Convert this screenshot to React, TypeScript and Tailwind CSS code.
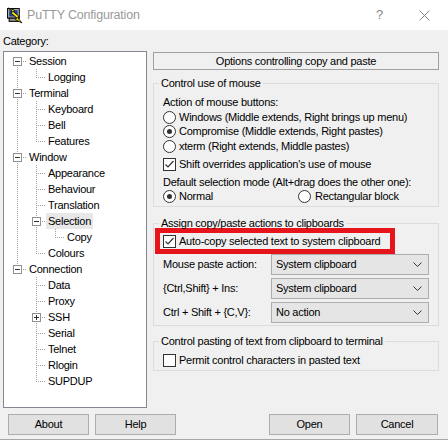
import React from "react";

type Node = { label: string; children?: Node[]; closed?: boolean };

type Row = {
  label: string;
  depth: number;
  first: boolean;
  last: boolean;
  cont: boolean[];
  expander: "" | "-" | "+";
};

const tree: Node[] = [
  { label: "Session", children: [{ label: "Logging" }] },
  {
    label: "Terminal",
    children: [{ label: "Keyboard" }, { label: "Bell" }, { label: "Features" }],
  },
  {
    label: "Window",
    children: [
      { label: "Appearance" },
      { label: "Behaviour" },
      { label: "Translation" },
      { label: "Selection", children: [{ label: "Copy" }] },
      { label: "Colours" },
    ],
  },
  {
    label: "Connection",
    children: [
      { label: "Data" },
      { label: "Proxy" },
      { label: "SSH", closed: true, children: [{ label: "Kex" }] },
      { label: "Serial" },
      { label: "Telnet" },
      { label: "Rlogin" },
      { label: "SUPDUP" },
    ],
  },
];

function flatten(nodes: Node[], depth: number, cont: boolean[], out: Row[]) {
  nodes.forEach((n, i) => {
    const last = i === nodes.length - 1;
    const expander = n.children ? (n.closed ? "+" : "-") : "";
    out.push({ label: n.label, depth, first: i === 0, last, cont, expander });
    if (n.children && !n.closed) flatten(n.children, depth + 1, [...cont, !last], out);
  });
  return out;
}

const rows = flatten(tree, 0, [], []);

// dotted tree guide for one row
function Guide({ row }: { row: Row }) {
  const w = 23 + row.depth * 19;
  const x = 13 + row.depth * 19 + 0.5;
  const dot = { stroke: "#a0a0a0", strokeDasharray: "1 1", shapeRendering: "crispEdges" as const };
  return (
    <svg width={w} height={16} className="shrink-0">
      {row.cont.map((c, d) =>
        c ? <line key={d} x1={13 + d * 19 + 0.5} y1={0} x2={13 + d * 19 + 0.5} y2={16} {...dot} /> : null
      )}
      {!(row.depth === 0 && row.first) && <line x1={x} y1={0} x2={x} y2={8} {...dot} />}
      {!row.last && <line x1={x} y1={8} x2={x} y2={16} {...dot} />}
      <line x1={x - 0.5} y1={8.5} x2={x + 9.5} y2={8.5} {...dot} />
      {row.expander && (
        <g shapeRendering="crispEdges">
          <rect x={x - 4} y={4.5} width={8} height={8} fill="#fff" stroke="#919191" />
          <line x1={x - 2.5} y1={8.5} x2={x + 2.5} y2={8.5} stroke="#333" />
          {row.expander === "+" && <line x1={x} y1={6} x2={x} y2={11} stroke="#333" />}
        </g>
      )}
    </svg>
  );
}

function Radio({ on }: { on?: boolean }) {
  return (
    <span className="w-[13px] h-[13px] rounded-full border border-[#333] bg-white flex items-center justify-center shrink-0">
      {on && <span className="w-[5px] h-[5px] rounded-full bg-[#333]" />}
    </span>
  );
}

function Check({ on }: { on?: boolean }) {
  return (
    <span className="w-[13px] h-[13px] border border-[#333] bg-white flex items-center justify-center shrink-0">
      {on && (
        <svg width="11" height="11" viewBox="0 0 11 11">
          <path d="M1.5 5.5 L4 8 L9.5 2" fill="none" stroke="#333" strokeWidth="1.2" />
        </svg>
      )}
    </span>
  );
}

function Select({ value }: { value: string }) {
  return (
    <div className="w-[158px] h-[21px] border border-[#adadad] bg-[#e5e5e5] flex items-center pl-[4px] pr-[6px]">
      <span className="flex-1">{value}</span>
      <svg width="9" height="5" viewBox="0 0 9 5">
        <path d="M0.5 0.5 L4.5 4.5 L8.5 0.5" fill="none" stroke="#333" strokeWidth="1" />
      </svg>
    </div>
  );
}

function Group({ title, children, className = "" }: { title: string; children: React.ReactNode; className?: string }) {
  return (
    <div className={`border border-[#dcdcdc] ${className}`}>
      <div className="-mt-[7px] ml-[5px] px-[2px] w-fit leading-[13px] bg-[#f0f0f0]">{title}</div>
      {children}
    </div>
  );
}

function Button({ label, className = "" }: { label: string; className?: string }) {
  return (
    <div className={`h-[21px] border border-[#adadad] bg-[#e1e1e1] flex items-center justify-center ${className}`}>
      {label}
    </div>
  );
}

function PuttyIcon() {
  return (
    <svg width="17" height="17" viewBox="0 0 16 16">
      <rect x="1.5" y="1.5" width="11" height="9" fill="#c0c0c0" stroke="#000" />
      <rect x="3" y="3" width="8" height="6" fill="#1f3f8f" />
      <rect x="3" y="10.5" width="9" height="3" fill="#9a9a9a" stroke="#000" />
      <path d="M2 1 L6 4 L5 6 L10 10 L9 12 L15 15 L11 10 L12 8.5 L7 4.5 L8 3 Z" fill="#f5e400" stroke="#000" strokeWidth="0.8" />
    </svg>
  );
}

export default function App() {
  return (
    <div className="w-[448px] h-[440px] bg-[#f0f0f0] border-b border-[#a8a8a8] text-[11px] tracking-[-0.25px] text-black font-['Liberation_Sans',Arial,sans-serif] overflow-hidden">
      {/* title bar */}
      <div className="h-[30px] bg-white flex items-center">
        <span className="ml-[6px]">
          <PuttyIcon />
        </span>
        <span className="ml-[4px] text-[12.5px] tracking-[-0.2px] text-[#9a9a9a]">PuTTY Configuration</span>
        <span className="ml-auto text-[13px] text-[#8a8a8a] mr-[36px]">?</span>
        <svg width="11" height="11" viewBox="0 0 11 11" className="mr-[18px]">
          <path d="M0.5 0.5 L10.5 10.5 M10.5 0.5 L0.5 10.5" stroke="#8a8a8a" strokeWidth="1" />
        </svg>
      </div>

      <div className="flex">
        {/* category tree */}
        <div className="pl-[3px] pt-[5px]">
          <div className="leading-[13px]">Category:</div>
          <div className="mt-[3px] w-[144px] h-[357px] border border-[#828790] bg-white pt-[1px]">
            {rows.map((r) => (
              <div key={r.label} className="h-[16px] flex items-center">
                <Guide row={r} />
                <span className={`px-[2px] h-[16px] leading-[16px] ${r.label === "Selection" ? "bg-[#e8e8e8]" : ""}`}>
                  {r.label}
                </span>
              </div>
            ))}
          </div>
        </div>

        {/* options panel */}
        <div className="ml-[6px] w-[286px] pt-[22px]">
          <div className="h-[18px] border border-[#a0a0a0] flex items-center justify-center">
            Options controlling copy and paste
          </div>

          <Group title="Control use of mouse" className="mt-[13px] pb-[3px]">
            <div className="pl-[9px] leading-[13px]">
              <div className="mt-[5px] h-[14px] flex items-center">Action of mouse buttons:</div>
              <div className="mt-[1px] h-[14px] flex items-center gap-[3px]">
                <Radio />
                <span>Windows (Middle extends, Right brings up menu)</span>
              </div>
              <div className="h-[15px] flex items-center gap-[3px]">
                <Radio on />
                <span>Compromise (Middle extends, Right pastes)</span>
              </div>
              <div className="h-[14px] flex items-center gap-[3px]">
                <Radio />
                <span>xterm (Right extends, Middle pastes)</span>
              </div>
              <div className="mt-[3px] h-[16px] flex items-center gap-[3px]">
                <Check on />
                <span>Shift overrides application's use of mouse</span>
              </div>
              <div className="mt-[4px] h-[13px] flex items-center">Default selection mode (Alt+drag does the other one):</div>
              <div className="h-[14px] flex items-center">
                <div className="w-[135px] flex items-center gap-[3px]">
                  <Radio on />
                  <span>Normal</span>
                </div>
                <div className="flex items-center gap-[4px]">
                  <Radio />
                  <span>Rectangular block</span>
                </div>
              </div>
            </div>
          </Group>

          <Group title="Assign copy/paste actions to clipboards" className="mt-[16px] pb-[2px]">
            <div className="-mt-[2px] ml-[1px] w-[240px] h-[26px] border-[5px] border-[#e8141c] pl-[3px] flex items-center gap-[3px]">
              <Check on />
              <span>Auto-copy selected text to system clipboard</span>
            </div>
            <div className="pl-[9px]">
              <div className="flex items-center">
                <span className="w-[108px]">Mouse paste action:</span>
                <Select value="System clipboard" />
              </div>
              <div className="mt-[3px] flex items-center">
                <span className="w-[108px]">{"{Ctrl,Shift} + Ins:"}</span>
                <Select value="System clipboard" />
              </div>
              <div className="mt-[3px] flex items-center">
                <span className="w-[108px]">{"Ctrl + Shift + {C,V}:"}</span>
                <Select value="No action" />
              </div>
            </div>
          </Group>

          <Group title="Control pasting of text from clipboard to terminal" className="mt-[15px] pb-[3px]">
            <div className="pl-[9px] mt-[5px] h-[14px] flex items-center gap-[3px]">
              <Check />
              <span>Permit control characters in pasted text</span>
            </div>
          </Group>
        </div>
      </div>

      {/* buttons */}
      <div className="mt-[6px] flex">
        <Button label="About" className="ml-[8px] w-[81px]" />
        <Button label="Help" className="ml-[6px] w-[81px]" />
        <Button label="Open" className="ml-auto w-[81px]" />
        <Button label="Cancel" className="ml-[6px] mr-[10px] w-[82px]" />
      </div>
    </div>
  );
}
